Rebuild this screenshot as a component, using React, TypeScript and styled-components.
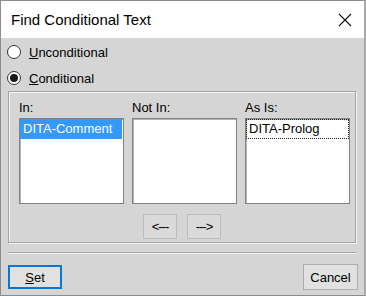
import React, { useState } from 'react';
import styled, { createGlobalStyle } from 'styled-components';

const GlobalStyle = createGlobalStyle`
  html, body {
    margin: 0;
    padding: 0;
    background: #ffffff;
  }
  * {
    box-sizing: border-box;
  }
`;

const Janela = styled.div`
  width: 366px;
  height: 296px;
  border: 1px solid #8c8c8c;
  border-right: 2px solid #a8a8a8;
  background-color: #d5d5d5;
  display: flex;
  flex-direction: column;
  font-family: "Liberation Sans", Arial, sans-serif;
  font-size: 13px;
  color: #000;
`;

const BarraTitulo = styled.div`
  height: 37px;
  flex-shrink: 0;
  background-color: #ffffff;
  display: flex;
  align-items: center;
  justify-content: space-between;
  padding: 0 12px 0 10px;
`;

const Titulo = styled.span`
  font-size: 15px;
  color: #000;
`;

const BotaoFechar = styled.div`
  width: 14px;
  height: 14px;
  display: flex;
  margin-top: 1px;
`;

const Corpo = styled.div`
  flex: 1;
  display: flex;
  flex-direction: column;
  padding: 1px 8px 0 7px;
`;

const LinhaRadio = styled.label`
  height: 26px;
  display: flex;
  align-items: center;
  gap: 8px;
  margin-left: -1px;
`;

const Circulo = styled.span<{ $marcado: boolean }>`
  width: 14px;
  height: 14px;
  border-radius: 50%;
  border: 1px solid #333;
  background: #fff;
  display: flex;
  align-items: center;
  justify-content: center;

  &::after {
    content: '';
    width: 8px;
    height: 8px;
    border-radius: 50%;
    background: #1a1a1a;
    display: ${(p) => (p.$marcado ? 'block' : 'none')};
  }
`;

const Grupo = styled.div`
  height: 152px;
  border: 1px solid #a3a3a3;
  box-shadow: inset 1px 1px 0 #f4f4f4, 1px 1px 0 #f4f4f4;
  padding: 8px 0 0 10px;
  display: flex;
  flex-direction: column;
`;

const Colunas = styled.div`
  display: grid;
  grid-template-columns: repeat(3, 105px);
  column-gap: 8px;
`;

const Coluna = styled.div`
  display: flex;
  flex-direction: column;
`;

const Rotulo = styled.div`
  line-height: 15px;
  height: 15px;
  margin-bottom: 3px;
`;

const Lista = styled.div`
  height: 86px;
  background: #fff;
  border: 1px solid #828282;
  box-shadow: inset 1px 1px 0 #b4b4b4;
  padding: 0;
`;

const Item = styled.div<{ $selecionado?: boolean; $foco?: boolean }>`
  height: 20px;
  line-height: 18px;
  padding-left: 2px;
  background: ${(p) => (p.$selecionado ? '#3399ff' : 'transparent')};
  color: ${(p) => (p.$selecionado ? '#fff' : '#000')};
  border: 1px ${(p) => (p.$foco ? 'dotted #222' : 'solid transparent')};
  margin-right: ${(p) => (p.$selecionado ? '1px' : '0')};
`;

const Setas = styled.div`
  display: flex;
  justify-content: center;
  gap: 10px;
  margin-top: 10px;
  margin-left: -10px;
`;

const BotaoSeta = styled.button`
  width: 34px;
  height: 25px;
  padding: 0;
  background: #dadada;
  border: 1px solid #bcbcbc;
  font-family: "Liberation Sans", Arial, sans-serif;
  font-size: 13px;
  color: #000;
  letter-spacing: -1px;
`;

const Separador = styled.div`
  height: 2px;
  margin-top: 9px;
  border-top: 1px solid #a3a3a3;
  border-bottom: 1px solid #f4f4f4;
`;

const Rodape = styled.div`
  display: flex;
  justify-content: space-between;
  align-items: center;
  margin-top: 10px;
  margin-right: -2px;
`;

const Botao = styled.button<{ $padrao?: boolean }>`
  width: ${(p) => (p.$padrao ? '54px' : '55px')};
  height: ${(p) => (p.$padrao ? '24px' : '26px')};
  padding: 0;
  background: #e1e1e1;
  border: ${(p) => (p.$padrao ? '2px solid #0078d7' : '1px solid #adadad')};
  font-family: "Liberation Sans", Arial, sans-serif;
  font-size: 13px;
  color: #000;
`;

export default function App() {
    const [condicional, setCondicional] = useState(true);

    return (
        <>
            <GlobalStyle />
            <Janela>
                <BarraTitulo>
                    <Titulo>Find Conditional Text</Titulo>
                    <BotaoFechar>
                        <svg width="14" height="14" viewBox="0 0 14 14">
                            <path d="M1 1 L13 13 M13 1 L1 13" stroke="#111" strokeWidth="1.1" fill="none" />
                        </svg>
                    </BotaoFechar>
                </BarraTitulo>
                <Corpo>
                    <LinhaRadio onClick={() => setCondicional(false)}>
                        <Circulo $marcado={!condicional} />
                        <span><u>U</u>nconditional</span>
                    </LinhaRadio>
                    <LinhaRadio onClick={() => setCondicional(true)}>
                        <Circulo $marcado={condicional} />
                        <span><u>C</u>onditional</span>
                    </LinhaRadio>
                    <Grupo>
                        <Colunas>
                            <Coluna>
                                <Rotulo>In:</Rotulo>
                                <Lista>
                                    <Item $selecionado>DITA-Comment</Item>
                                </Lista>
                            </Coluna>
                            <Coluna>
                                <Rotulo>Not In:</Rotulo>
                                <Lista />
                            </Coluna>
                            <Coluna>
                                <Rotulo>As Is:</Rotulo>
                                <Lista>
                                    <Item $foco>DITA-Prolog</Item>
                                </Lista>
                            </Coluna>
                        </Colunas>
                        <Setas>
                            <BotaoSeta>&lt;---</BotaoSeta>
                            <BotaoSeta>---&gt;</BotaoSeta>
                        </Setas>
                    </Grupo>
                    <Separador />
                    <Rodape>
                        <Botao $padrao><u>S</u>et</Botao>
                        <Botao>Cancel</Botao>
                    </Rodape>
                </Corpo>
            </Janela>
        </>
    );
}
